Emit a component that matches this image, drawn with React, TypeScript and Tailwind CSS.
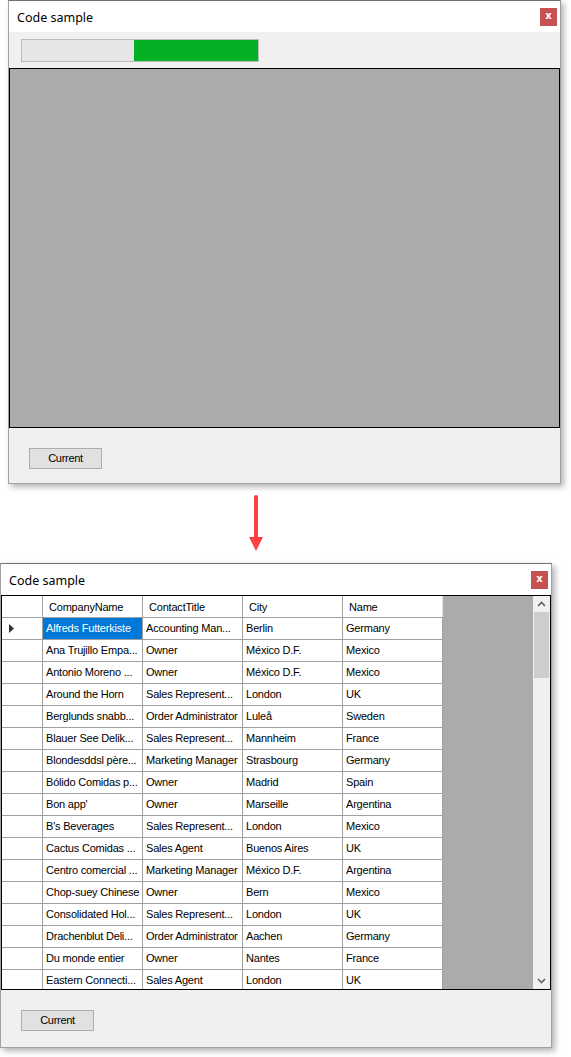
import React from "react";

const rows: [string, string, string, string][] = [
  ["Alfreds Futterkiste", "Accounting Man...", "Berlin", "Germany"],
  ["Ana Trujillo Empa...", "Owner", "México D.F.", "Mexico"],
  ["Antonio Moreno ...", "Owner", "México D.F.", "Mexico"],
  ["Around the Horn", "Sales Represent...", "London", "UK"],
  ["Berglunds snabb...", "Order Administrator", "Luleå", "Sweden"],
  ["Blauer See Delik...", "Sales Represent...", "Mannheim", "France"],
  ["Blondesddsl père...", "Marketing Manager", "Strasbourg", "Germany"],
  ["Bólido Comidas p...", "Owner", "Madrid", "Spain"],
  ["Bon app'", "Owner", "Marseille", "Argentina"],
  ["B's Beverages", "Sales Represent...", "London", "Mexico"],
  ["Cactus Comidas ...", "Sales Agent", "Buenos Aires", "UK"],
  ["Centro comercial ...", "Marketing Manager", "México D.F.", "Argentina"],
  ["Chop-suey Chinese", "Owner", "Bern", "Mexico"],
  ["Consolidated Hol...", "Sales Represent...", "London", "UK"],
  ["Drachenblut Deli...", "Order Administrator", "Aachen", "Germany"],
  ["Du monde entier", "Owner", "Nantes", "France"],
  ["Eastern Connecti...", "Sales Agent", "London", "UK"],
];

const columns = ["CompanyName", "ContactTitle", "City", "Name"];

function TitleBar() {
  return (
    <div className="h-[31px] bg-white flex items-center justify-between shrink-0">
      <span className="pl-[8px] pt-[3px] text-[12.5px] text-black font-['Noto_Sans','Segoe_UI',sans-serif] leading-none">
        Code sample
      </span>
      <div className="mr-[3px] w-[17px] h-[18px] bg-[#c75050] flex items-center justify-center text-white text-[10px] font-bold font-['DejaVu_Sans',sans-serif] leading-none pb-[2px]">
        x
      </div>
    </div>
  );
}

function CurrentButton() {
  return (
    <div className="w-[73px] h-[21px] bg-[#e1e1e1] border border-[#adadad] flex items-center justify-center text-[11px] tracking-[-0.3px] text-black font-['Liberation_Sans',sans-serif]">
      Current
    </div>
  );
}

function Grid() {
  return (
    <div className="h-[395px] border border-black bg-[#ababab] flex overflow-hidden font-['Liberation_Sans',Arial,sans-serif] text-[11px] tracking-[-0.2px] text-black">
      <div className="flex flex-col w-[441px] shrink-0 bg-white">
        {/* header */}
        <div className="flex h-[22px] shrink-0 border-b border-[#a0a0a0]">
          <div className="w-[41px] border-r border-[#a0a0a0]" />
          {columns.map((c) => (
            <div
              key={c}
              className="w-[100px] border-r border-[#a0a0a0] flex items-center pl-[6px] pt-[1px] last:border-r-[#e6e6e6]"
            >
              {c}
            </div>
          ))}
        </div>
        {rows.map((r, i) => (
          <div key={i} className="flex h-[22px] shrink-0 border-b border-[#a0a0a0]">
            <div className="w-[41px] border-r border-[#a0a0a0] flex items-center pl-[7px]">
              {i === 0 && (
                <svg width="6" height="9" viewBox="0 0 6 9">
                  <path d="M0 0 L5 4.5 L0 9 Z" fill="#333" />
                </svg>
              )}
            </div>
            {r.map((cell, j) => (
              <div
                key={j}
                className={`w-[100px] border-r border-[#a0a0a0] flex items-center pl-[3px] whitespace-nowrap overflow-hidden ${
                  i === 0 && j === 0 ? "bg-[#0078d7] text-white" : ""
                }`}
              >
                {cell}
              </div>
            ))}
          </div>
        ))}
      </div>
      <div className="flex-1" />
      {/* scrollbar */}
      <div className="w-[17px] shrink-0 bg-[#f0f0f0] flex flex-col">
        <div className="h-[16px] flex items-center justify-center">
          <svg width="9" height="6" viewBox="0 0 9 6">
            <path d="M1 5 L4.5 1.5 L8 5" stroke="#606060" strokeWidth="1.6" fill="none" />
          </svg>
        </div>
        <div className="mx-[1px] h-[66px] bg-[#cdcdcd]" />
        <div className="flex-1" />
        <div className="h-[17px] flex items-center justify-center">
          <svg width="9" height="6" viewBox="0 0 9 6">
            <path d="M1 1 L4.5 4.5 L8 1" stroke="#606060" strokeWidth="1.6" fill="none" />
          </svg>
        </div>
      </div>
    </div>
  );
}

export default function App() {
  return (
    <div className="w-[571px] h-[1057px] bg-white flex flex-col overflow-hidden">
      {/* before */}
      <div className="ml-[8px] w-[553px] h-[484px] border border-[#a0a0a0] border-t-[#707070] flex flex-col shadow-[3px_3px_6px_rgba(0,0,0,0.3)]">
        <TitleBar />
        <div className="flex-1 bg-[#f0f0f0] flex flex-col">
          <div className="mt-[7px] mb-[6px] ml-[12px] w-[238px] h-[23px] border border-[#bcbcbc] bg-[#e6e6e6] flex">
            <div className="w-[112px]" />
            <div className="flex-1 bg-[#06b025]" />
          </div>
          <div className="h-[360px] border border-black bg-[#ababab]" />
          <div className="mt-[20px] ml-[20px]">
            <CurrentButton />
          </div>
        </div>
      </div>

      {/* arrow */}
      <div className="h-[79px] flex items-center pl-[248px]">
        <svg width="16" height="58" viewBox="0 0 16 58">
          <line x1="8" y1="2" x2="8" y2="44" stroke="#ff4040" strokeWidth="4" strokeLinecap="round" />
          <path d="M1 42 L15 42 L8 56 Z" fill="#ff4040" />
        </svg>
      </div>

      {/* after */}
      <div className="w-[552px] h-[485px] border border-[#a0a0a0] border-t-[#707070] flex flex-col shadow-[3px_3px_6px_rgba(0,0,0,0.3)]">
        <TitleBar />
        <div className="flex-1 bg-[#f0f0f0] flex flex-col">
          <Grid />
          <div className="mt-[20px] ml-[20px]">
            <CurrentButton />
          </div>
        </div>
      </div>
    </div>
  );
}
